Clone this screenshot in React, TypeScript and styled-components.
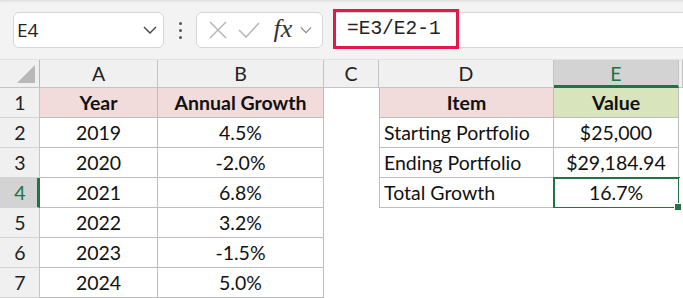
import React from "react";
import styled, { createGlobalStyle } from "styled-components";

const Global = createGlobalStyle`
  html, body { margin: 0; padding: 0; background: #ffffff; }
  body { width: 683px; height: 298px; overflow: hidden; font-family: "Lato", "Liberation Sans", sans-serif; }
  * { box-sizing: border-box; }
`;

const Page = styled.div`
  width: 683px;
  height: 298px;
  display: flex;
  flex-direction: column;
  overflow: hidden;
`;

const Toolbar = styled.div`
  height: 60px;
  flex: none;
  background: #f3f3f3;
  box-shadow: inset 0 3px 3px -2px #d6d6d6;
  display: flex;
  align-items: center;
  padding: 1px 0 0 13px;
  border-bottom: 1px solid #e2e2e2;
`;

const NameBox = styled.div`
  width: 151px;
  height: 36px;
  background: #fff;
  border: 1px solid #d6d6d6;
  border-radius: 6px;
  display: flex;
  align-items: center;
  justify-content: space-between;
  padding: 0 6px 0 3px;
  font-family: "Open Sans", "Liberation Sans", sans-serif;
  font-size: 19px;
  color: #222;
`;

const Dots = styled.div`
  width: 32px;
  display: flex;
  flex-direction: column;
  align-items: center;
  gap: 4px;
  & > span {
    width: 3px;
    height: 3px;
    background: #555;
    border-radius: 50%;
  }
`;

const FxBox = styled.div`
  width: 127px;
  height: 36px;
  background: #fff;
  border: 1px solid #d6d6d6;
  border-radius: 6px;
  display: flex;
  align-items: center;
  padding: 0 0 0 8px;
`;

const IconSlot = styled.div<{ $w: number }>`
  width: ${(p) => p.$w}px;
  display: flex;
  align-items: center;
  justify-content: center;
  flex: none;
`;

const Fx = styled.span`
  font-family: "Liberation Serif", "DejaVu Serif", serif;
  font-style: italic;
  font-size: 26px;
  color: #333;
  line-height: 1;
  margin-top: -3px;
`;

const FormulaBar = styled.div`
  margin-left: 10px;
  flex: 1;
  height: 36px;
  background: #fff;
  border-top: 1px solid #d6d6d6;
  border-bottom: 1px solid #d6d6d6;
  display: flex;
  align-items: center;
`;

const Highlight = styled.div`
  width: 126px;
  height: 40px;
  margin-top: -2px;
  border: 3px solid #e2194a;
  display: flex;
  align-items: center;
  padding-left: 11px;
  font-family: "Liberation Mono", "DejaVu Sans Mono", monospace;
  font-size: 19.5px;
  color: #222;
  flex: none;
`;

const Grid = styled.div`
  display: grid;
  grid-template-columns: 40px 118px 166px 55px 175px 125px 1fr;
  grid-template-rows: 28px repeat(7, 30px);
  font-family: "Lato", "Liberation Sans", sans-serif;
  font-size: 19.5px;
  color: #111;
`;

const ColHead = styled.div<{ $sel?: boolean }>`
  background: ${(p) => (p.$sel ? "#d3d3d3" : "#f0f0f0")};
  color: ${(p) => (p.$sel ? "#217346" : "#222")};
  border-right: 1px solid #c4c4c4;
  border-bottom: ${(p) => (p.$sel ? "3px solid #217346" : "1px solid #c4c4c4")};
  display: flex;
  align-items: center;
  justify-content: center;
  padding-top: ${(p) => (p.$sel ? "2px" : "0")};
`;

const Corner = styled.div`
  background: #f0f0f0;
  border-right: 1px solid #b9b9b9;
  border-bottom: 1px solid #c4c4c4;
  display: flex;
  align-items: flex-end;
  justify-content: flex-end;
  padding: 0 4px 4px 0;
`;

const RowHead = styled.div<{ $sel?: boolean }>`
  background: ${(p) => (p.$sel ? "#d3d3d3" : "#f0f0f0")};
  color: ${(p) => (p.$sel ? "#217346" : "#222")};
  border-right: ${(p) => (p.$sel ? "3px solid #217346" : "1px solid #c4c4c4")};
  border-bottom: 1px solid #d4d4d4;
  display: flex;
  align-items: center;
  justify-content: center;
  padding-left: ${(p) => (p.$sel ? "3px" : "1px")};
`;

const Cell = styled.div<{
  $bg?: string;
  $bold?: boolean;
  $align?: "left" | "center";
  $box?: boolean;
  $left?: boolean;
}>`
  position: relative;
  background: ${(p) => p.$bg || "#fff"};
  font-weight: ${(p) => (p.$bold ? 700 : 400)};
  display: flex;
  align-items: center;
  justify-content: ${(p) => (p.$align === "left" ? "flex-start" : "center")};
  padding-left: ${(p) => (p.$align === "left" ? "4px" : "0")};
  border-right: ${(p) => (p.$box ? "1px solid #bdbdbd" : "none")};
  border-bottom: ${(p) => (p.$box ? "1px solid #bdbdbd" : "none")};
  border-left: ${(p) => (p.$left ? "1px solid #bdbdbd" : "none")};
  white-space: nowrap;
`;

const Selected = styled(Cell)`
  &::after {
    content: "";
    position: absolute;
    left: -1px;
    top: -1px;
    right: -2px;
    bottom: -2px;
    border: 2px solid #217346;
    pointer-events: none;
  }
  &::before {
    content: "";
    position: absolute;
    right: -4px;
    bottom: -4px;
    width: 6px;
    height: 6px;
    background: #217346;
    border: 1px solid #fff;
    z-index: 2;
  }
`;

const Chevron = ({ color = "#444", w = 14 }: { color?: string; w?: number }) => (
  <svg width={w} height={8} viewBox="0 0 14 8">
    <path d="M1 1 L7 7 L13 1" fill="none" stroke={color} strokeWidth="1.4" />
  </svg>
);

const years = [
  ["2019", "4.5%"],
  ["2020", "-2.0%"],
  ["2021", "6.8%"],
  ["2022", "3.2%"],
  ["2023", "-1.5%"],
  ["2024", "5.0%"],
];

const items: [string, string][] = [
  ["Starting Portfolio", "$25,000"],
  ["Ending Portfolio", "$29,184.94"],
  ["Total Growth", "16.7%"],
];

export default function App() {
  const rows: React.ReactNode[] = [];
  for (let r = 1; r <= 7; r++) {
    rows.push(
      <RowHead key={`rh${r}`} $sel={r === 4}>
        {r}
      </RowHead>
    );
    if (r === 1) {
      rows.push(
        <Cell key="a1" $bg="#f2dcdb" $bold $box>
          Year
        </Cell>,
        <Cell key="b1" $bg="#f2dcdb" $bold $box>
          Annual Growth
        </Cell>,
        <Cell key="c1" />,
        <Cell key="d1" $bg="#f2dcdb" $bold $box $left>
          Item
        </Cell>,
        <Cell key="e1" $bg="#d8e4bc" $bold $box>
          Value
        </Cell>,
        <Cell key="f1" />
      );
    } else {
      const [y, g] = years[r - 2];
      rows.push(
        <Cell key={`a${r}`} $box>
          {y}
        </Cell>,
        <Cell key={`b${r}`} $box>
          {g}
        </Cell>,
        <Cell key={`c${r}`} />
      );
      const it = items[r - 2];
      if (it) {
        rows.push(
          <Cell key={`d${r}`} $box $left $align="left">
            {it[0]}
          </Cell>
        );
        if (r === 4) {
          rows.push(
            <Selected key={`e${r}`} $box>
              {it[1]}
            </Selected>
          );
        } else {
          rows.push(
            <Cell key={`e${r}`} $box>
              {it[1]}
            </Cell>
          );
        }
      } else {
        rows.push(<Cell key={`d${r}`} />, <Cell key={`e${r}`} />);
      }
      rows.push(<Cell key={`f${r}`} />);
    }
  }

  return (
    <Page>
      <Global />
      <Toolbar>
        <NameBox>
          <span>E4</span>
          <Chevron />
        </NameBox>
        <Dots>
          <span />
          <span />
          <span />
        </Dots>
        <FxBox>
          <IconSlot $w={26}>
            <svg width="18" height="18" viewBox="0 0 18 18">
              <path d="M1 1 L17 17 M17 1 L1 17" stroke="#b5b5b5" strokeWidth="1.5" />
            </svg>
          </IconSlot>
          <IconSlot $w={36}>
            <svg width="22" height="16" viewBox="0 0 22 16">
              <path d="M1 8 L8 15 L21 1" fill="none" stroke="#b5b5b5" strokeWidth="1.5" />
            </svg>
          </IconSlot>
          <IconSlot $w={32}>
            <Fx>fx</Fx>
          </IconSlot>
          <IconSlot $w={14}>
            <Chevron color="#888" w={12} />
          </IconSlot>
        </FxBox>
        <FormulaBar>
          <Highlight>=E3/E2-1</Highlight>
        </FormulaBar>
      </Toolbar>
      <Grid>
        <Corner>
          <svg width="18" height="18" viewBox="0 0 18 18">
            <path d="M18 0 L18 18 L0 18 Z" fill="#b8b8b8" />
          </svg>
        </Corner>
        <ColHead>A</ColHead>
        <ColHead>B</ColHead>
        <ColHead>C</ColHead>
        <ColHead>D</ColHead>
        <ColHead $sel>E</ColHead>
        <ColHead />
        {rows}
      </Grid>
    </Page>
  );
}
